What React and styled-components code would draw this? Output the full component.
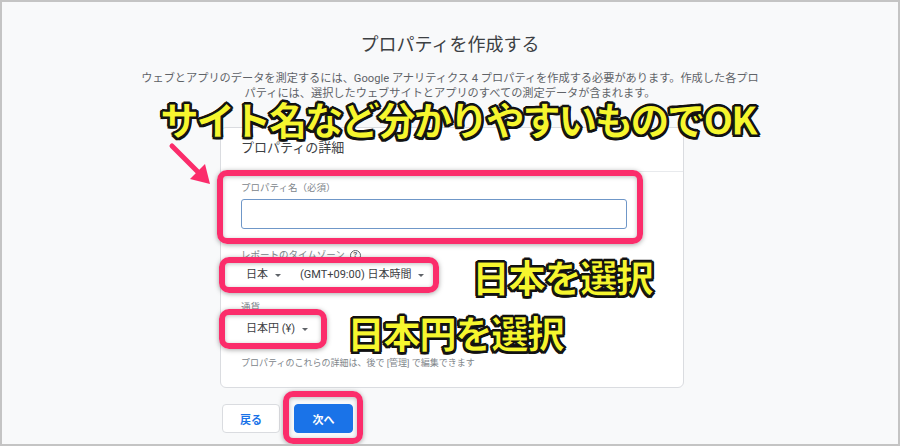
import React from 'react'
import styled, { createGlobalStyle } from 'styled-components'

const GlobalStyle = createGlobalStyle`
  html, body {
    margin: 0;
    padding: 0;
  }
  body {
    font-family: Roboto, "Noto Sans CJK JP", sans-serif;
    color: #3c4043;
  }
`

const Page = styled.div`
  position: relative;
  width: 900px;
  height: 446px;
  box-sizing: border-box;
  border: 2px solid #c4c4c4;
  background: #f8f9fa;
  overflow: hidden;
`

const Title = styled.h1`
  margin: 31px 0 0;
  font-size: 18px;
  line-height: 24px;
  font-weight: 400;
  text-align: center;
  color: #3c4043;
`

const Description = styled.p`
  margin: 14px auto 0;
  width: 660px;
  font-size: 11.2px;
  line-height: 15px;
  text-align: center;
  color: #5f6368;
`

const Column = styled.div`
  margin-left: 218px;
  width: 464px;
`

const Card = styled.section`
  margin-top: 26px;
  background: #fff;
  border: 1px solid #dadce0;
  border-radius: 6px;
`

const CardHeader = styled.div`
  height: 44px;
  box-sizing: border-box;
  padding: 11px 20px 0;
  font-size: 13px;
  line-height: 17px;
  color: #3c4043;
  border-bottom: 1px solid #e8eaed;
`

const CardBody = styled.div`
  padding: 0 56px 17px 20px;
`

const Highlight = styled.div`
  position: relative;
  width: ${p => (p.$fit ? 'fit-content' : 'auto')};
  margin-top: ${p => p.$mt || 0}px;
  &::after {
    content: '';
    position: absolute;
    top: ${p => p.$t}px;
    left: ${p => p.$l}px;
    right: ${p => p.$r}px;
    bottom: ${p => p.$b}px;
    border: 6px solid #fb2d6b;
    border-radius: 10px;
    box-shadow: 0 1px 5px rgba(0, 0, 0, 0.35), inset 0 1px 4px rgba(0, 0, 0, 0.25);
    pointer-events: none;
  }
`

const Label = styled.div`
  margin-top: ${p => p.$mt || 0}px;
  display: flex;
  align-items: center;
  gap: 5px;
  font-size: 9.5px;
  line-height: 14px;
  color: #80868b;
`

const Help = styled.span`
  display: inline-flex;
  align-items: center;
  justify-content: center;
  width: 9px;
  height: 9px;
  border: 1.3px solid #5f6368;
  border-radius: 50%;
  font-size: 8px;
  font-weight: 700;
  color: #5f6368;
`

const Input = styled.div`
  margin-top: 4px;
  height: 28px;
  border: 1px solid #6f97c8;
  border-radius: 3px;
  background: #fff;
`

const SelectRow = styled.div`
  display: flex;
  align-items: center;
  gap: 19px;
  height: 20px;
  padding-left: 5px;
`

const Select = styled.span`
  display: inline-flex;
  align-items: center;
  gap: 7px;
  font-size: 11px;
  line-height: 20px;
  color: #3c4043;
  &::after {
    content: '';
    border-left: 3px solid transparent;
    border-right: 3px solid transparent;
    border-top: 3.5px solid #5f6368;
  }
`

const Note = styled.div`
  margin-top: 17px;
  font-size: 9px;
  line-height: 14px;
  color: #80868b;
`

const Buttons = styled.div`
  margin-top: 16px;
  display: flex;
  gap: 14px;
  padding-left: 2px;
`

const Button = styled.button`
  display: block;
  width: ${p => p.$w}px;
  height: 29px;
  border-radius: 4px;
  font-family: inherit;
  font-size: 11px;
  font-weight: 700;
  border: 1px solid ${p => (p.$primary ? '#1a73e8' : '#dadce0')};
  background: ${p => (p.$primary ? '#1a73e8' : '#fff')};
  color: ${p => (p.$primary ? '#fff' : '#1a73e8')};
  padding: 0;
`

const Callout = styled.div`
  position: absolute;
  left: ${p => p.$x}px;
  top: ${p => p.$y}px;
  font-family: "Noto Sans CJK JP", sans-serif;
  font-weight: 900;
  font-size: ${p => p.$size}px;
  line-height: 1;
  letter-spacing: ${p => p.$ls}px;
  white-space: nowrap;
  color: #f6f62e;
  -webkit-text-stroke: 1.2px #111;
  text-shadow:
    2px 0 0 #111, -2px 0 0 #111, 0 2px 0 #111, 0 -2px 0 #111,
    1.5px 1.5px 0 #111, -1.5px 1.5px 0 #111, 1.5px -1.5px 0 #111, -1.5px -1.5px 0 #111,
    0 0 4px rgba(255, 255, 255, 0.8);
`

const Arrow = styled.svg`
  position: absolute;
  left: 164px;
  top: 137px;
`

export default function App() {
  return (
    <Page>
      <GlobalStyle />
      <Title>プロパティを作成する</Title>
      <Description>
        ウェブとアプリのデータを測定するには、Google アナリティクス 4 プロパティを作成する必要があります。作成した各プロ
        <br />
        パティには、選択したウェブサイトとアプリのすべての測定データが含まれます。
      </Description>
      <Column>
        <Card>
          <CardHeader>プロパティの詳細</CardHeader>
          <CardBody>
            <Highlight $t={-11} $l={-24} $r={-16} $b={-15}>
              <Label $mt={9}>プロパティ名（必須）</Label>
              <Input />
            </Highlight>
            <Label $mt={19}>
              レポートのタイムゾーン <Help>?</Help>
            </Label>
            <Highlight $fit $mt={3} $t={-8} $l={-22} $r={-15} $b={-8}>
              <SelectRow>
                <Select>日本</Select>
                <Select>(GMT+09:00) 日本時間</Select>
              </SelectRow>
            </Highlight>
            <Label $mt={15}>通貨</Label>
            <Highlight $fit $mt={5} $t={-10} $l={-22} $r={-19} $b={-10}>
              <SelectRow>
                <Select>日本円 (¥)</Select>
              </SelectRow>
            </Highlight>
            <Note>プロパティのこれらの詳細は、後で [管理] で編集できます</Note>
          </CardBody>
        </Card>
        <Buttons>
          <Button $w={58}>戻る</Button>
          <Highlight $t={-13} $l={-11} $r={-10} $b={-11}>
            <Button $primary $w={59}>次へ</Button>
          </Highlight>
        </Buttons>
      </Column>

      <Arrow width="50" height="50" viewBox="0 0 50 50">
        <line x1="6" y1="7" x2="34" y2="35" stroke="#fb2d6b" strokeWidth="5" strokeLinecap="round" />
        <polygon points="44,45 24,40 39,25" fill="#fb2d6b" />
      </Arrow>
      <Callout $x={158} $y={97} $size={39} $ls={-2.8}>サイト名など分かりやすいものでOK</Callout>
      <Callout $x={470} $y={255} $size={38} $ls={-2}>日本を選択</Callout>
      <Callout $x={345} $y={311} $size={38} $ls={-2}>日本円を選択</Callout>
    </Page>
  )
}
